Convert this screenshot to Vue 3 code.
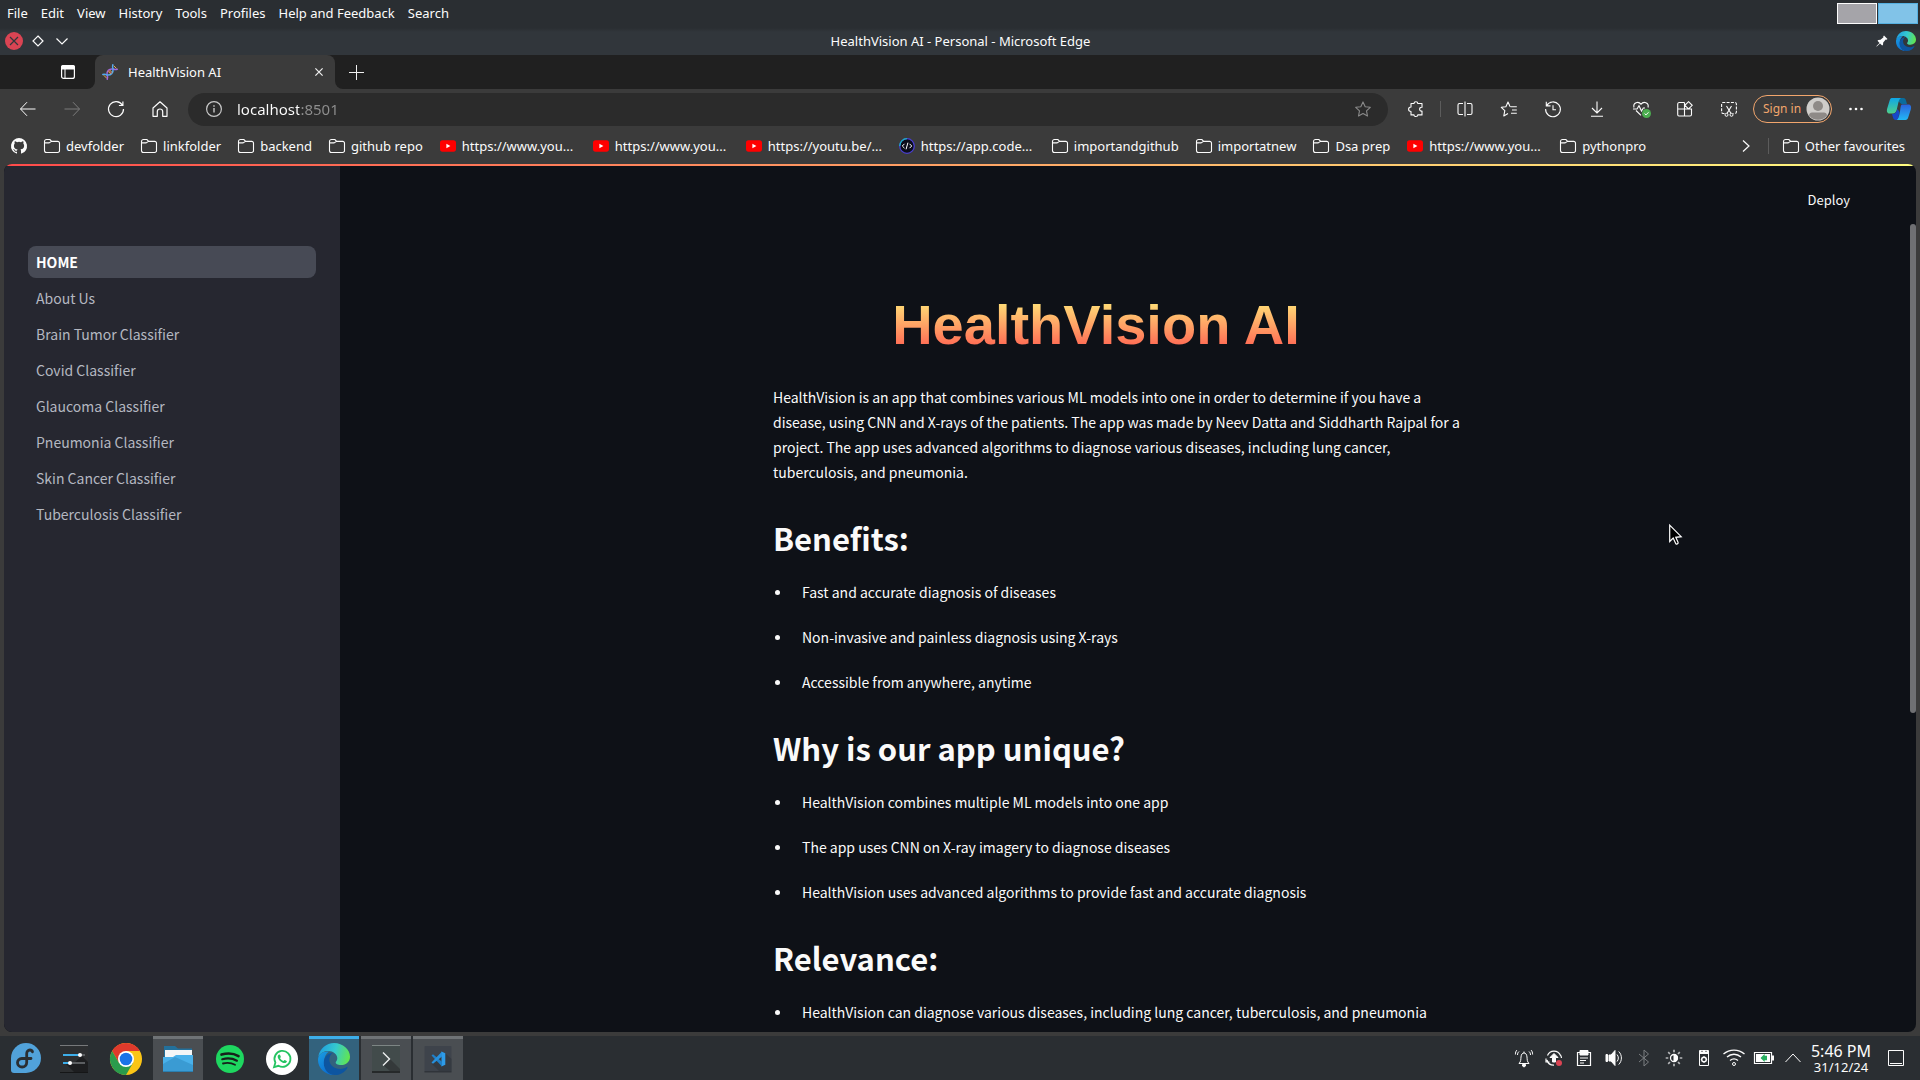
<script setup>
const menus = ['File', 'Edit', 'View', 'History', 'Tools', 'Profiles', 'Help and Feedback', 'Search']

const glyphs = {
  back: '<path d="M15.5 8H.5M7 1.2.5 8 7 14.8"/>',
  forward: '<path d="M.5 8h15M9 1.2 15.5 8 9 14.8"/>',
  refresh: '<path d="M14.4 4.2A7.5 7.5 0 1 0 15.5 8M14.9.5v4h-4" stroke-width="1.2"/>',
  home: '<path d="M1 15.3V7L8 .8 15 7v8.3h-4.3v-4.6a2.7 2.7 0 0 0-5.4 0v4.6z" stroke-width="1.2" stroke-linejoin="round"/>',
  info: '<circle cx="8" cy="8" r="7.4" stroke-width="1.2"/><path d="M8 7v4.5M8 4.3v1.4" stroke-width="1.4"/>',
  star: '<path d="m8 .9 2.2 4.8 5.1.6-3.8 3.5 1 5.2L8 12.5 3.5 15l1-5.2L.7 6.3l5.1-.6z" stroke-width="1.1" stroke-linejoin="round"/>',
  puzzle: '<path d="M3 2.5h3C6 .2 9.8.2 9.8 2.5H14v3.8c-3.2-.6-3.2 4.4 0 3.8v3.8H9.8c0 2.1-3.8 2.1-3.8 0H3v-3.4C-.2 10.5-.2 6 3 6z" stroke-width="1.1" stroke-linejoin="round"/>',
  split: '<path d="M6 2.500H2.500A1.500 1.500 0 0 0 1 4v8a1.500 1.500 0 0 0 1.500 1.500H6M10 2.500h3.500A1.500 1.500 0 0 1 15 4v8a1.500 1.500 0 0 1-1.500 1.500H10M8 .5v15" stroke-width="1.1"/>',
  favs: '<path d="M9.5 5.7h6.300M11 9h4.800M10 12.300h5.800M8.800 5 7 1 4.900 5.700.3 6.300l3.500 3.400-1 5.200L7 12.500M8.800 5l.4.700" stroke-width="1.1" stroke-linejoin="round"/>',
  history: '<path d="M1.600 4.600A7.400 7.400 0 1 1 .6 8M1.300.7v4.200h4.200M8 4.200v4.600h3" stroke-width="1.1"/>',
  download: '<path d="M8 .5v11M3 7l5 5 5-5M2 15.300h12" stroke-width="1.1"/>',
  heart: '<path d="M1 6.500C-.3 1.500 5.500-.3 8 3.300c2.500-3.600 8.300-1.800 7 3.200M8 14.300 3 9.500M0 8h4l2-3.300 2.500 5.300L10.300 7H12" stroke-width="1.1"/><circle cx="13.500" cy="12.500" r="4.500" fill="#4caf50" stroke="none"/><path d="m11.600 12.600 1.400 1.300 2.500-2.600"/>',
  apps: '<path d="M7.500 1.500H2A1.500 1.500 0 0 0 .7 3v10.500A1.500 1.500 0 0 0 2 15h11a1.500 1.500 0 0 0 1.500-1.500V8H.7M7.500 1.500V15M11.500.7l3.700 3.600-3.700 3.600-3.600-3.600z" stroke-width="1.1"/>',
  shot: '<path d="M3.500 12.500H2A1.500 1.500 0 0 1 .6 11V3A1.500 1.500 0 0 1 2 1.500h12A1.500 1.500 0 0 1 15.400 3v8a1.500 1.500 0 0 1-1.400 1.500h-1.500" stroke-dasharray="3 1.300" stroke-width="1.1"/><path d="m5.500 5 4.500 7.500M10.500 5 6 12.500" stroke-width="1.1"/><circle cx="5.500" cy="13.800" r="1.500"/><circle cx="10.500" cy="13.800" r="1.500"/>',
  dots: '<g fill="currentColor" stroke="none"><circle cx="2.500" cy="8" r="1.300"/><circle cx="8" cy="8" r="1.300"/><circle cx="13.500" cy="8" r="1.300"/></g>',
  folder: '<path d="M2.500 1.500h3.400l1.800 1.900h6a1.800 1.800 0 0 1 1.800 1.800v7.500a1.800 1.800 0 0 1-1.800 1.800H2.500a2 2 0 0 1-2-2v-9a2 2 0 0 1 2-2zM.5 4.900H5l2.500-1.500" stroke-width="1.100"/>',
  youtube: '<rect y="2.300" width="16" height="11.400" rx="2.600" fill="#f00" stroke="none"/><path d="M6.400 5.700v4.600l4-2.300z" fill="#fff" stroke="none"/>',
  code: '<circle cx="8" cy="8" r="7.300" fill="#0b0d1a" stroke="#4a3fd0" stroke-width="1.300"/><path d="M.7 8A7.300 7.300 0 0 1 8 .7" stroke="#19b5c4" stroke-width="1.300"/><path d="M5.500 5.800 3.300 8l2.200 2.200M10.500 5.800 12.700 8l-2.200 2.200M8.900 4.700 7.100 11.300" stroke="#fff"/>',
  github: '<path fill="currentColor" stroke="none" d="M8 0a8 8 0 0 0-2.530 15.590c.4.070.55-.17.550-.38v-1.490c-2.230.49-2.700-.95-2.700-.95-.36-.92-.89-1.170-.89-1.170-.73-.5.050-.490.050-.490.810.06 1.230.830 1.230.830.720 1.230 1.880.880 2.340.670.070-.520.280-.880.510-1.080-1.780-.2-3.640-.890-3.640-3.950 0-.870.310-1.590.820-2.150-.080-.2-.360-1.020.080-2.120 0 0 .670-.210 2.200.820a7.700 7.700 0 0 1 4 0c1.530-1.040 2.200-.820 2.200-.820.440 1.100.160 1.920.080 2.120.510.560.820 1.270.820 2.150 0 3.070-1.870 3.750-3.650 3.950.290.250.540.730.540 1.480v2.200c0 .210.150.460.550.380A8 8 0 0 0 8 0z"/>',
  chevron: '<path d="m5 2.500 6 5.500-6 5.500" stroke-width="1.200"/>',
}

const navTools = ['back', 'forward', 'refresh', 'home']
const rightTools = ['split', 'favs', 'history', 'download', 'heart', 'apps', 'shot']

const bookmarks = [
  { icon: 'github', label: '' },
  { icon: 'folder', label: 'devfolder' },
  { icon: 'folder', label: 'linkfolder' },
  { icon: 'folder', label: 'backend' },
  { icon: 'folder', label: 'github repo' },
  { icon: 'youtube', label: 'https://www.you...', long: true },
  { icon: 'youtube', label: 'https://www.you...', long: true },
  { icon: 'youtube', label: 'https://youtu.be/...', long: true },
  { icon: 'code', label: 'https://app.code...', long: true },
  { icon: 'folder', label: 'importandgithub' },
  { icon: 'folder', label: 'importatnew' },
  { icon: 'folder', label: 'Dsa prep' },
  { icon: 'youtube', label: 'https://www.you...', long: true },
  { icon: 'folder', label: 'pythonpro' },
]

const pages = [
  'HOME',
  'About Us',
  'Brain Tumor Classifier',
  'Covid Classifier',
  'Glaucoma Classifier',
  'Pneumonia Classifier',
  'Skin Cancer Classifier',
  'Tuberculosis Classifier',
]

const sections = [
  {
    title: 'Benefits:',
    items: [
      'Fast and accurate diagnosis of diseases',
      'Non-invasive and painless diagnosis using X-rays',
      'Accessible from anywhere, anytime',
    ],
  },
  {
    title: 'Why is our app unique?',
    items: [
      'HealthVision combines multiple ML models into one app',
      'The app uses CNN on X-ray imagery to diagnose diseases',
      'HealthVision uses advanced algorithms to provide fast and accurate diagnosis',
    ],
  },
  {
    title: 'Relevance:',
    items: ['HealthVision can diagnose various diseases, including lung cancer, tuberculosis, and pneumonia'],
  },
]

const edgeLogo =
  '<defs><linearGradient id="edge-top" x1="0" y1=".4" x2="1" y2=".6"><stop offset="0" stop-color="#1f9fe0"/><stop offset=".5" stop-color="#35c9cf"/><stop offset="1" stop-color="#62e64c"/></linearGradient><linearGradient id="edge-side" x1="0" y1="0" x2=".6" y2="1"><stop offset="0" stop-color="#1b9de2"/><stop offset="1" stop-color="#0a6cd0"/></linearGradient></defs>' +
  '<path fill="url(#edge-side)" d="M0 17C0 11 5 8 11 8.500c-3 2-5 6-5 10.500 0 6 4 11.500 10 13C7 32 0 25 0 17z"/>' +
  '<path fill="#0d55a0" d="M5.800 20c0-6 4-10 9-10-2.500 1.500-3.500 4-3.500 6.500 0 5.500 5 9.500 11 9.500 3 0 5.200-1.200 6.400-2 .600-.4 1 .1.700.700C27.500 28.500 23 32 17 32 10.500 32 5.800 26.500 5.800 20z"/>' +
  '<path fill="url(#edge-top)" d="M.3 13.500C1.800 5.500 8.500 0 16 0c9 0 16 6.500 16 13.700 0 5-4 8.300-8.700 8.300-4 0-5.600-1.300-5.600-2.500 0-1.100 1.600-1.700 1.600-4.300 0-3.700-4-7.200-9-7.200-4.500 0-8 2-10 5.500z"/>'

const apps = [
  {
    name: 'System Settings',
    art: '<rect x="2" y="2" width="28" height="28" fill="#2d2f31"/><path d="M2 2h28v1H2z" fill="#77797b"/><path d="M2 29h28v1H2z" fill="#151617"/><path d="m24 13 6 6v10H16L8 21l8-1z" fill="#1d1e20"/><path d="M5 12h17M5 20h7" stroke="#3daee9" stroke-width="2"/><path d="M22 12h5M12 20h15" stroke="#5b5e61" stroke-width="2"/><circle cx="22" cy="12" r="2" fill="#fff"/><circle cx="12" cy="20" r="2" fill="#fff"/>',
  },
  {
    name: 'Google Chrome',
    art: '<circle cx="16" cy="16" r="16" fill="#fbc516"/><path d="M16 16V8h13.860A16 16 0 0 0 2.140 8l6.930 12z" fill="#df3a2c"/><path d="M2.140 8A16 16 0 0 0 16 32l6.930-12L16 16l-6.930 4z" fill="#2a9b4c"/><circle cx="16" cy="16" r="8" fill="#fff"/><circle cx="16" cy="16" r="6.300" fill="#1a73e8"/>',
  },
  {
    name: 'Files',
    open: true,
    art: '<path d="M2 3h11l3 2.500h14V14H2z" fill="#23709b"/><path d="M3 7h27v10H3z" fill="#f4f6f7"/><path d="M1 14h10l3-2h17v17H1z" fill="#4ab1ea"/><path d="m1 21 12-7 18 8v7H1z" fill="#3a9bd3"/><path d="M1 28h30v1H1z" fill="#2b7fb0"/>',
  },
  {
    name: 'Spotify',
    art: '<circle cx="16" cy="16" r="14" fill="#1ed760"/><g fill="none" stroke="#17201b" stroke-linecap="round"><path d="M7.500 11.600c6-1.700 12.500-1.100 17 1.500" stroke-width="2.600"/><path d="M8.300 16.200c5.300-1.400 10.500-.8 14.600 1.500" stroke-width="2.200"/><path d="M9 20.500c4.500-1 8.500-.6 12 1.300" stroke-width="1.800"/></g>',
  },
  {
    name: 'WhatsApp',
    art: '<circle cx="16" cy="16" r="16" fill="#fff"/><path d="M8 24.200 9.400 19.600a8 8 0 1 1 3.100 3.200z" fill="none" stroke="#25c462" stroke-width="1.800"/><path d="M13.300 11.500c-.9 0-1.600 1-1.600 2 0 3 4 6.600 6.900 6.600 1.200 0 2.300-.8 2.300-1.800 0-.4-2-1.500-2.400-1.400-.5.100-.8 1.100-1.200 1.100-.9 0-3.300-2-3.300-2.900 0-.3.800-.8.800-1.200 0-.4-.700-2.400-1.500-2.400z" fill="#25c462"/>',
  },
  { name: 'Microsoft Edge', active: true, art: edgeLogo },
  {
    name: 'Konsole',
    open: true,
    art: '<rect x="2" y="2" width="28" height="28" fill="#424b4b"/><path d="M2 2h28v1H2z" fill="#7d8584"/><path d="M2 28h28v2H2z" fill="#26292a"/><path d="m20 16 10 10v2H20l-7-6z" fill="#34393a"/><path d="m13 9.500 6.500 6.500-6.500 6.500" fill="none" stroke="#eceeee" stroke-width="1.400"/>',
  },
  {
    name: 'Visual Studio Code',
    open: true,
    art: '<rect x="2.500" y="3" width="27" height="26" rx="1" fill="#3e434b"/><path d="M2.500 28h27v1.500h-27z" fill="#30343a"/><path d="m23 10 6.500 6v12H17l-7-7z" fill="#353a41"/><path d="m19.500 8.500 3.800 1.700v11.600l-3.800 1.700z" fill="#2e9be8"/><path d="m9.500 12.500 1.500-1.200 9 7.400v4.800z" fill="#1f7fc8"/><path d="m9.500 19.500 1.500 1.200 9-7.200V8.500z" fill="#2790dd"/>',
  },
]

const tray = [
  { name: 'Notifications', art: '<path d="M4 14.500c2-2 1.800-4 2-6.500.3-2.700 1.300-4 3-4s2.700 1.300 3 4c.2 2.500 0 4.500 2 6.500zM9 4V2.500M4 2.500c-1 .8-1.500 2-1.500 3.500M2 1C.9 2 .4 3.500.4 5.500M14 2.500c1 .8 1.500 2 1.500 3.500M16 1c1.100 1 1.600 2.500 1.600 4.500"/><path d="M7.500 15.500h3V17l-1.500 1-1.500-1z" fill="currentColor"/>' },
  { name: 'Updates', art: '<path d="M2.500 6.500a7 7 0 0 1 13 0M2 11a7 7 0 0 0 7 5.200M1 9.500V13h3.500M16.500 9a8 8 0 0 0-1-3" stroke-width="1.200"/><path d="m9 4.500 4 4h-2.500V13h-3V8.500H5z" fill="currentColor"/><circle cx="14" cy="14" r="3" fill="#da4453" stroke="none"/>' },
  { name: 'Clipboard', art: '<path d="M2.500 3.500h13v13h-13zM5 9h8M5 11.500h6M5 14h4" stroke-width="1.200"/><path d="M5 1.500h8V6H5z" fill="currentColor"/>' },
  { name: 'Volume', art: '<path d="M1 5.500h1.500v7H1z" fill="currentColor"/><path d="M4 6h2l4-4.500v15L6 12H4z" fill="currentColor"/><path d="M12 5.500c1.800 2 1.800 5 0 7M13.700 2.500c3.600 3.500 3.600 9.500 0 13"/>' },
  { name: 'Bluetooth', dim: true, art: '<path d="m4 5 9.500 8L9 17V1l4.500 4L4 13"/>' },
  { name: 'Brightness', art: '<circle cx="9" cy="9" r="3.500" stroke-width="1.300"/><path d="M9 5.500a3.500 3.500 0 0 1 0 7z" fill="currentColor"/><path d="M9 .7v2.600M9 14.700v2.600M.7 9h2.600M14.700 9h2.600M3.200 3.200 5 5M13 13l1.800 1.800M14.800 3.200 13 5M5 13l-1.800 1.800" stroke-width="1.700" stroke="#b5b7b9"/>' },
  { name: 'Devices', art: '<path d="M4.500 1.500h9v15h-9zM4.500 4.500h9"/><path d="M5 2h8v2H5z" fill="currentColor"/><circle cx="9" cy="10.500" r="2.300" stroke-width="1.500"/><path d="M9 7v1M9 13v1M5.800 10.500h1M11.200 10.500h1"/><path d="M7 1.800v1.200M11 1.800v1.200" stroke="#2a2e32"/>' },
  { name: 'Network', art: '<circle cx="9" cy="15" r="1.500"/><path d="M5 11.500c2.400-2 5.600-2 8 0M2 8c4-3.700 10-3.700 14 0M-1.500 5C4.500-.3 13.500-.3 19.500 5" stroke-width="1.300"/>' },
  { name: 'Battery', art: '<path d="M-.5 3.500h17v11h-17z" stroke-width="1.200"/><path d="M17 6.500h2v5h-2z" fill="currentColor" stroke="none"/><path d="M1 5h14v8H1z" fill="#fff" stroke="none"/><path d="M6 9h6M9 6.500 6.500 9 9 11.500zM9 7.500h3M9 10.500h3" stroke="#27ae60" fill="#27ae60" stroke-width="1.300"/>' },
]
</script>

<template>
  <div class="desktop">
    <header class="menubar">
      <nav class="menus" aria-label="Application menu">
        <button v-for="m in menus" :key="m" type="button">{{ m }}</button>
      </nav>
      <div class="pager">
        <button type="button" class="desk" aria-label="Desktop 1"></button>
        <button type="button" class="desk current" aria-label="Desktop 2"></button>
      </div>
    </header>

    <div class="titlebar">
      <div class="win-left">
        <button type="button" aria-label="Close">
          <svg width="18" height="18" viewBox="0 0 18 18"><circle cx="9" cy="9" r="9" fill="#da4453" /><path d="m5 5 8 8m0-8-8 8" stroke="#31363b" stroke-width="1.200" /></svg>
        </button>
        <button type="button" aria-label="Restore">
          <svg width="18" height="18" viewBox="0 0 18 18" fill="none" stroke="#fcfcfc" stroke-width="1.200"><path d="M9 4 14 9 9 14 4 9z" /></svg>
        </button>
        <button type="button" aria-label="Minimise">
          <svg width="18" height="18" viewBox="0 0 18 18" fill="none" stroke="#fcfcfc" stroke-width="1.200"><path d="m3.500 6.500 5.500 5.500 5.500-5.500" /></svg>
        </button>
      </div>
      <div class="win-title">HealthVision AI - Personal - Microsoft Edge</div>
      <div class="win-right">
        <svg width="12" height="12" viewBox="0 0 12 12" fill="#fcfcfc"><path d="M8 .5 11.500 4l-1 .8-.8-.3-2.500 3L7 9.700l-.8.8-2.200-2L.8 11.500l-.5-.3L3.500 8l-2-2.200.8-.8 2.200-.2 3-2.500L7.200 1.500z" /></svg>
        <svg width="20" height="20" viewBox="0 0 32 32" v-html="edgeLogo"></svg>
      </div>
    </div>

    <div class="tabstrip">
      <div class="strip-left">
        <button type="button" aria-label="Tab actions">
          <svg width="14" height="14" viewBox="0 0 14 14"><rect x=".6" y=".6" width="12.800" height="12.800" rx="2" fill="none" stroke="#fff" stroke-width="1.200" /><path d="M0 2a2 2 0 0 1 2-2h10a2 2 0 0 1 2 2v2.500H0z" fill="#fff" /><path d="M4 4v9.500" stroke="#fff" /></svg>
        </button>
      </div>
      <div class="tab-back">
        <div class="tab">
          <svg width="16" height="16" viewBox="0 0 16 16" fill="none" stroke-width="1.500" stroke-linecap="round">
            <path d="M5 11C4.500 7 7 4.500 11 5M5 11c.6 1 .6 2.800.2 4.300M11 5c1.200.6 3 .6 4.300.2" stroke="#a066e0" />
            <path d="M5 11c4 .5 6.500-2 6-6M5 11c-1-.6-2.500-1-4.200-.6M11 5C10.400 4 10.400 2.500 10.800.8" stroke="#55a8ee" />
            <path d="m6.300 7.500 2.200 2.200M7.800 6.200l2 2" stroke="#e8b050" stroke-width="1" />
            <path d="m2 11.500 2.500 2.500M12 2l2.200 2.200" stroke="#e8b050" stroke-width="1" />
            <path d="m7 6.800 2.200 2.200" stroke="#d8505c" stroke-width="1" />
          </svg>
          <span>HealthVision AI</span>
          <button type="button" aria-label="Close tab">
            <svg width="8" height="8" viewBox="0 0 8 8" stroke="#f0f0f0" stroke-width="1.200"><path d="m.4.4 7.200 7.200m0-7.200L.4 7.600" /></svg>
          </button>
        </div>
      </div>
      <div class="strip-right">
        <button type="button" aria-label="New tab">
          <svg width="15" height="15" viewBox="0 0 15 15" stroke="#f0f0f0" stroke-width="1"><path d="M7.500 0v15M0 7.500h15" /></svg>
        </button>
      </div>
    </div>

    <div class="toolbar">
      <button v-for="t in navTools" :key="t" type="button" class="tool" :class="{ off: t === 'forward' }" :aria-label="t">
        <svg class="glyph" viewBox="0 0 16 16" v-html="glyphs[t]"></svg>
      </button>
      <div class="address">
        <svg class="glyph soft" viewBox="0 0 16 16" v-html="glyphs.info"></svg>
        <input type="text" value="localhost:8501" aria-label="Address" />
        <button type="button" aria-label="Add to favourites">
          <svg class="glyph faint" viewBox="0 0 16 16" v-html="glyphs.star"></svg>
        </button>
      </div>
      <button type="button" class="tool" aria-label="Extensions">
        <svg class="glyph" viewBox="0 0 16 16" v-html="glyphs.puzzle"></svg>
      </button>
      <span class="rule"></span>
      <button v-for="t in rightTools" :key="t" type="button" class="tool" :aria-label="t">
        <svg class="glyph" viewBox="0 0 16 16" v-html="glyphs[t]"></svg>
      </button>
      <button type="button" class="signin">
        Sign in
        <svg width="24" height="24" viewBox="0 0 24 24"><circle cx="12" cy="12" r="11.500" fill="#cfcdca" /><circle cx="12" cy="9" r="5" fill="#8e8a87" /><path d="M3 18.500c0-2 1.500-3 3-3h12c1.500 0 3 1 3 3a11.500 11.500 0 0 1-18 0z" fill="#8e8a87" /></svg>
      </button>
      <button type="button" class="tool" aria-label="More">
        <svg class="glyph" viewBox="0 0 16 16" v-html="glyphs.dots"></svg>
      </button>
      <button type="button" class="tool copilot" aria-label="Copilot">
        <svg width="24" height="24" viewBox="0 0 24 24">
          <defs>
            <linearGradient id="cop-a" x1="0" y1="0" x2="0" y2="1"><stop offset="0" stop-color="#0ea5e8" /><stop offset="1" stop-color="#4fd08a" /></linearGradient>
            <linearGradient id="cop-b" x1="0" y1="0" x2="0" y2="1"><stop offset="0" stop-color="#2b62dc" /><stop offset="1" stop-color="#22b8f5" /></linearGradient>
          </defs>
          <path d="M9 1h7.500c1.500 0 2 1 2.500 2.500L20 7h-5.500L12 5z" fill="#0a6c9c" />
          <path d="M5.500 1H14c-2 1-2.500 4-3.300 7.500C9.700 13 9.500 16 6 16.500H2.500C0 16.500-.5 14 .2 11.500L2.800 3C3.300 1.500 4 1 5.500 1z" fill="url(#cop-a)" />
          <path d="M5 17c3 0 4.500-2 5.500-5l2 3-1 5c-.5 2-1.500 3-2.500 3-2 0-2.500-1-3-2.500z" fill="#1748c8" />
          <path d="M15 7.500h6.500c2.500 0 3 2.500 2.300 5l-2.600 8c-.5 1.500-1.200 2.500-2.700 2.500H9.500c2-1 2.500-4 3.300-7.500.8-4.500.7-7.500 2.200-8z" fill="url(#cop-b)" />
        </svg>
      </button>
    </div>

    <nav class="bookmarks" aria-label="Favourites">
      <a v-for="(b, i) in bookmarks" :key="i" href="#" :class="{ long: b.long }" :aria-label="b.label || 'GitHub'">
        <svg class="glyph" viewBox="0 0 16 16" v-html="glyphs[b.icon]"></svg>
        <span v-if="b.label">{{ b.label }}</span>
      </a>
      <div class="overflow">
        <button type="button" aria-label="More favourites">
          <svg class="glyph" viewBox="0 0 16 16" v-html="glyphs.chevron"></svg>
        </button>
        <span class="rule"></span>
        <a href="#">
          <svg class="glyph" viewBox="0 0 16 16" v-html="glyphs.folder"></svg>
          <span>Other favourites</span>
        </a>
      </div>
    </nav>

    <div class="viewport">
      <div class="page">
        <div class="accent"></div>
        <aside class="sidebar">
          <a v-for="(p, i) in pages" :key="p" href="#" :class="{ selected: i === 0 }">{{ p }}</a>
        </aside>
        <main>
          <div class="app-header"><button type="button">Deploy</button></div>
          <article>
            <h1>HealthVision AI</h1>
            <p>
              HealthVision is an app that combines various ML models into one in order to determine if you have a disease,
              using CNN and X-rays of the patients. The app was made by Neev Datta and Siddharth Rajpal for a project. The
              app uses advanced algorithms to diagnose various diseases, including lung cancer, tuberculosis, and pneumonia.
            </p>
            <section v-for="s in sections" :key="s.title">
              <h2>{{ s.title }}</h2>
              <ul>
                <li v-for="item in s.items" :key="item">{{ item }}</li>
              </ul>
            </section>
          </article>
        </main>
        <div class="thumb"></div>
        <svg class="cursor" width="14" height="22" viewBox="0 0 14 22"><path d="M.7 1.200v16.300l3.500-3.400 2.500 5.400c.5 1.100 2.900.2 2.400-1.100l-2.300-5.100 5.400-.6z" fill="#000" stroke="#fff" stroke-width="1.200" /></svg>
      </div>
    </div>

    <footer class="taskbar">
      <button type="button" class="launcher" aria-label="Start">
        <svg width="30" height="30" viewBox="0 0 30 30"><path d="M15 0a15 15 0 1 1 0 30H3a3 3 0 0 1-3-3V15A15 15 0 0 1 15 0z" fill="#51a2da" /><path d="M21.500 8.800c-.4-1.200-1.500-1.800-2.600-1.800-2 0-3.200 1.500-3.200 3.800v8.700c0 2.700-2 4.500-4.600 4.500s-4.600-1.800-4.600-4.200 1.900-4.300 4.300-4.300h9.200" fill="none" stroke="#2a2e32" stroke-width="2.800" stroke-linecap="round" /></svg>
      </button>
      <button v-for="a in apps" :key="a.name" type="button" class="app" :class="{ open: a.open, active: a.active }" :aria-label="a.name">
        <svg width="32" height="32" viewBox="0 0 32 32" v-html="a.art"></svg>
      </button>
      <div class="tray">
        <button v-for="t in tray" :key="t.name" type="button" :class="{ dim: t.dim }" :aria-label="t.name">
          <svg width="18" height="18" viewBox="0 0 18 18" v-html="t.art"></svg>
        </button>
        <button type="button" class="caret" aria-label="Show hidden icons">
          <svg width="18" height="18" viewBox="0 0 18 18"><path d="m1.500 13 7.500-8 7.500 8" /></svg>
        </button>
        <div class="clock"><time>5:46 PM</time><small>31/12/24</small></div>
        <button type="button" class="peek" aria-label="Show desktop">
          <svg width="16" height="16" viewBox="0 0 16 16"><path d="M.5.5h15v15H.5zM2 13.500h12" /></svg>
        </button>
      </div>
    </footer>
  </div>
</template>

<style>
body {
  margin: 0;
  background: #3b3b3b;
}
</style>

<style scoped>
* {
  box-sizing: border-box;
}
button {
  display: flex;
  align-items: center;
  justify-content: center;
  margin: 0;
  padding: 0;
  border: 0;
  background: none;
  color: inherit;
  font: inherit;
}
a {
  color: inherit;
  text-decoration: none;
}
svg {
  display: block;
  flex: none;
  overflow: visible;
}
.desktop {
  display: flex;
  flex-direction: column;
  height: 100vh;
  overflow: hidden;
  color: #fcfcfc;
  font: 13px/18px 'Noto Sans', sans-serif;
  white-space: nowrap;
}
.glyph {
  width: 16px;
  height: 16px;
  fill: none;
  stroke: currentColor;
}

/* desktop menu bar */
.menubar {
  display: flex;
  justify-content: space-between;
  height: 28px;
  padding: 0 2px 0 7px;
  background: #2a2e32;
}
.menus {
  display: flex;
  align-items: center;
  gap: 13px;
  padding-bottom: 2px;
}
.pager {
  display: flex;
  gap: 1px;
  padding: 3px 0 4px;
}
.desk {
  width: 40px;
  background: #a5a4a9;
  border: 1px solid #fcfcfc;
}
.desk.current {
  background: #81c3e8;
  border-color: #56b0e0;
}

/* window title bar */
.titlebar {
  display: flex;
  align-items: center;
  height: 27px;
  padding: 0 4px 1px 5px;
  background: linear-gradient(#2a2e32, #31363b 4px);
}
.win-left,
.win-right {
  flex: 1;
  display: flex;
  align-items: center;
  gap: 6px;
}
.win-right {
  justify-content: flex-end;
  gap: 8px;
}

/* tabs */
.tabstrip {
  display: flex;
  height: 34px;
}
.strip-left {
  display: flex;
  align-items: center;
  justify-content: flex-end;
  width: 95px;
  padding-right: 20px;
  background: #202020;
  border-bottom-right-radius: 8px;
}
.tab-back {
  width: 240px;
  background: #202020;
}
.tab {
  display: flex;
  align-items: center;
  height: 100%;
  padding: 0 12px 0 7px;
  border-radius: 8px 8px 0 0;
  background: #3b3b3b;
  gap: 10px;
}
.tab span {
  flex: 1;
}
.strip-right {
  display: flex;
  flex: 1;
  align-items: center;
  padding-left: 14px;
  background: #202020;
  border-bottom-left-radius: 8px;
}

/* toolbar */
.toolbar {
  display: flex;
  align-items: center;
  height: 40px;
  padding-left: 6px;
}
.tool {
  flex: none;
  width: 44px;
  height: 32px;
}
.tool.off {
  color: #7c7c7c;
}
.address {
  display: flex;
  flex: 1;
  align-items: center;
  gap: 15px;
  height: 33px;
  margin: 0 6px;
  padding: 0 17px 0 18px;
  border-radius: 17px;
  background: #2b2b2b;
}
.address input {
  flex: 1;
  min-width: 0;
  padding: 0;
  border: 0;
  outline: 0;
  background: linear-gradient(90deg, #fff 62px, #8f8f8f 62px);
  background-clip: text;
  -webkit-background-clip: text;
  -webkit-text-fill-color: transparent;
  font: 15px/20px 'Noto Sans', sans-serif;
}
.soft {
  color: #c8c8c8;
}
.faint {
  color: #8a8a8a;
}
.rule {
  flex: none;
  width: 1px;
  height: 16px;
  margin: 0 2px;
  background: #5c5c5c;
}
.signin {
  flex: none;
  justify-content: space-between;
  width: 79px;
  height: 28px;
  margin: 0 2px;
  padding: 0 1px 0 9px;
  border: 1px solid #f2a66d;
  border-radius: 14px;
  color: #f2a66d;
  font-size: 12px;
}
.tool.copilot {
  width: 42px;
}

/* bookmarks */
.bookmarks {
  display: flex;
  align-items: center;
  gap: 17px;
  height: 33px;
  padding: 0 15px 0 11px;
}
.bookmarks a {
  display: flex;
  align-items: center;
  gap: 6px;
}
.bookmarks .long {
  width: 136px;
}
.overflow {
  display: flex;
  flex: 1;
  align-items: center;
  justify-content: flex-end;
  gap: 12px;
}

/* web page */
.viewport {
  flex: 1;
  min-height: 0;
  padding: 2px 4px 4px;
}
.page {
  position: relative;
  display: flex;
  height: 100%;
  overflow: hidden;
  border-radius: 8px;
  background: #0e1117;
  color: #fafafa;
  font: 14px/25px 'Noto Sans CJK SC', 'Noto Sans', sans-serif;
}
.accent {
  position: absolute;
  inset: 0 0 auto;
  height: 2px;
  background: linear-gradient(90deg, #ff4b4b, #fffd80);
}
.sidebar {
  display: flex;
  flex: none;
  flex-direction: column;
  gap: 4px;
  width: 336px;
  padding: 82px 24px 0;
  background: #262730;
}
.sidebar a {
  height: 32px;
  padding: 0 8px;
  border-radius: 8px;
  color: #b4b7c0;
  line-height: 32px;
}
.sidebar .selected {
  background: #474a55;
  color: #fff;
  font-weight: 700;
}
main {
  flex: 1;
  min-width: 0;
  padding-right: 6px;
}
.app-header {
  display: flex;
  align-items: center;
  justify-content: flex-end;
  height: 70px;
  padding-right: 60px;
  font-size: 13px;
}
article {
  width: 704px;
  margin: 57px auto 0;
  white-space: normal;
}
h1 {
  margin: 0 58px 27px 0;
  background: linear-gradient(#fffd80, #ff4b4b);
  background-clip: text;
  -webkit-background-clip: text;
  color: transparent;
  font: 700 56px/67px 'Liberation Sans', Arial, sans-serif;
  text-align: center;
}
p {
  margin: 0;
}
h2 {
  margin: 0;
  padding: 33px 0 22px;
  font-size: 31px;
  font-weight: 700;
  line-height: 40px;
}
ul {
  display: flex;
  flex-direction: column;
  gap: 20px;
  margin: 0;
  padding: 0 0 0 2px;
  list-style: none;
}
li {
  display: flex;
  align-items: center;
  gap: 22px;
}
li::before {
  content: '';
  flex: none;
  width: 5px;
  height: 5px;
  border-radius: 50%;
  background: currentColor;
}
.thumb {
  position: absolute;
  top: 60px;
  right: 0;
  width: 6px;
  height: 489px;
  border-radius: 3px;
  background: #6f7073;
}
.cursor {
  position: absolute;
  top: 360px;
  left: 1665px;
}

/* taskbar */
.taskbar {
  display: flex;
  flex: none;
  gap: 2px;
  height: 44px;
  padding: 0 3px 0 5px;
  background: #2a2e32;
}
.launcher {
  width: 42px;
}
.app {
  width: 50px;
  padding-bottom: 2px;
  border-top: 3px solid transparent;
}
.app.open {
  border-color: #6f7376;
  background: #4a4e52;
}
.app.active {
  border-color: #3daee9;
  background: #33627d;
}
.tray {
  display: flex;
  flex: 1;
  align-items: center;
  justify-content: flex-end;
}
.tray svg {
  fill: none;
  stroke: currentColor;
}
.tray button {
  width: 30px;
}
.tray .dim {
  color: #7b7e81;
}
.tray .caret {
  width: 28px;
}
.tray .peek {
  width: 42px;
}
.clock {
  display: flex;
  flex-direction: column;
  align-items: center;
  width: 68px;
}
.clock time {
  font-size: 16px;
}
.clock small {
  font-size: 13px;
  line-height: 14px;
}
</style>
